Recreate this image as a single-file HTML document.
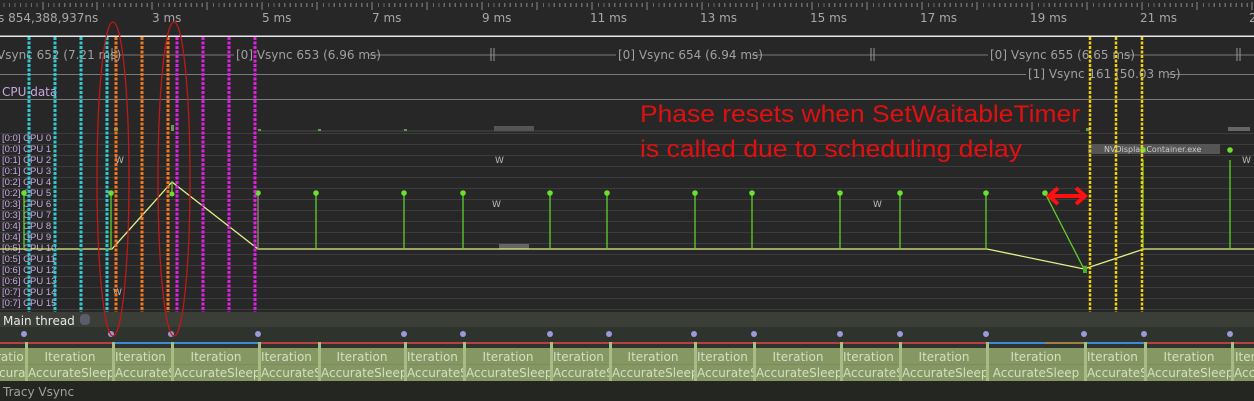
<!DOCTYPE html>
<html><head><meta charset="utf-8"><style>
html,body{margin:0;padding:0;background:#272727;width:1254px;height:401px;overflow:hidden}
svg{display:block;font-family:"DejaVu Sans","Liberation Sans",sans-serif}
</style></head><body>
<svg width="1254" height="401" viewBox="0 0 1254 401" xmlns="http://www.w3.org/2000/svg">
<rect width="1254" height="401" fill="#272727"/>
<g stroke="#8a8a8a" stroke-width="1">
<path d="M43 2V10M97 2V10M152 2V10M207 2V10M262 2V10M317 2V10M372 2V10M427 2V10M482 2V10M537 2V10M592 2V10M647 2V10M702 2V10M757 2V10M812 2V10M867 2V10M922 2V10M977 2V10M1032 2V10M1087 2V10M1142 2V10M1197 2V10M1252 2V10"/>
</g>
<g stroke="#6a6a6a" stroke-width="1" id="small">
<path d="M4 3V7M9.5 3V7M15 3V7M20.5 3V7M26 3V7M31.5 3V7M37 3V7M48.5 3V7M54 3V7M59.5 3V7M65 3V7M70.5 3V7M76 3V7M81.5 3V7M87 3V7M92.5 3V7"/>
</g>
<use href="#small" x="55"/><use href="#small" x="110"/><use href="#small" x="165"/><use href="#small" x="220"/><use href="#small" x="275"/><use href="#small" x="330"/><use href="#small" x="385"/><use href="#small" x="440"/><use href="#small" x="495"/><use href="#small" x="550"/><use href="#small" x="605"/><use href="#small" x="660"/><use href="#small" x="715"/><use href="#small" x="770"/><use href="#small" x="825"/><use href="#small" x="880"/><use href="#small" x="935"/><use href="#small" x="990"/><use href="#small" x="1045"/><use href="#small" x="1100"/><use href="#small" x="1155"/><use href="#small" x="1210"/>
<g fill="#a8a8a8" font-size="12">
<text x="-2" y="22">s 854,388,937ns</text>
<text x="152" y="22">3 ms</text><text x="262" y="22">5 ms</text><text x="372" y="22">7 ms</text>
<text x="482" y="22">9 ms</text><text x="590" y="22">11 ms</text><text x="700" y="22">13 ms</text>
<text x="810" y="22">15 ms</text><text x="920" y="22">17 ms</text><text x="1030" y="22">19 ms</text>
<text x="1140" y="22">21 ms</text><text x="1249" y="22">2</text>
</g>
<rect x="0" y="35.5" width="1254" height="1.5" fill="#e8e8e8"/>
<g stroke="#7a7a7a" stroke-width="1">
<line x1="0" y1="55" x2="1254" y2="55"/>
<line x1="0" y1="74.5" x2="1254" y2="74.5"/>
<line x1="0" y1="99.5" x2="1254" y2="99.5"/>
<path d="M112 48V61M115 48V61M491 48V61M494 48V61M871 48V61M874 48V61M1237 48V61M1240 48V61" stroke="#9a9a9a"/>
</g>
<g font-size="12" fill="#a0a0a0">
<rect x="0" y="46" width="110" height="16" fill="#272727"/>
<text x="-3" y="59">Vsync 652 (7.21 ms)</text>
<rect x="234" y="46" width="134" height="16" fill="#272727"/>
<text x="236" y="59">[0] Vsync 653 (6.96 ms)</text>
<rect x="616" y="46" width="136" height="16" fill="#272727"/>
<text x="618" y="59">[0] Vsync 654 (6.94 ms)</text>
<rect x="988" y="46" width="136" height="16" fill="#272727"/>
<text x="990" y="59">[0] Vsync 655 (6.65 ms)</text>
<rect x="1026" y="66" width="142" height="16" fill="#272727"/>
<text x="1028" y="78">[1] Vsync 161 (50.03 ms)</text>
</g>
<text x="2" y="96" font-size="12" fill="#c9a6e0">CPU data</text>
<g stroke="#3c3c3c" stroke-width="1">
<path d="M0 133.5H1254M0 144.5H1254M0 155.5H1254M0 166.5H1254M0 177.5H1254M0 188.5H1254M0 199.5H1254M0 210.5H1254M0 221.5H1254M0 232.5H1254M0 243.5H1254M0 254.5H1254M0 265.5H1254M0 276.5H1254M0 287.5H1254M0 298.5H1254M0 309.5H1254"/>
</g>
<path d="M258 131H1080" stroke="#4a4a4a"/>
<g font-size="9.5" fill="#c8a8e4" font-family="'Liberation Sans',sans-serif">
<text x="2" y="141">[0:0] CPU 0</text><text x="2" y="152">[0:0] CPU 1</text><text x="2" y="163">[0:1] CPU 2</text>
<text x="2" y="174">[0:1] CPU 3</text><text x="2" y="185">[0:2] CPU 4</text><text x="2" y="196">[0:2] CPU 5</text>
<text x="2" y="207">[0:3] CPU 6</text><text x="2" y="218">[0:3] CPU 7</text><text x="2" y="229">[0:4] CPU 8</text>
<text x="2" y="240">[0:4] CPU 9</text><text x="2" y="251">[0:5] CPU 10</text><text x="2" y="262">[0:5] CPU 11</text>
<text x="2" y="273">[0:6] CPU 12</text><text x="2" y="284">[0:6] CPU 13</text><text x="2" y="295">[0:7] CPU 14</text>
<text x="2" y="306">[0:7] CPU 15</text>
</g>
<g fill="#5fa050"><rect x="258" y="129" width="3" height="2"/><rect x="318" y="129" width="3" height="2"/><rect x="404" y="129" width="3" height="2"/><rect x="114" y="128" width="4" height="3"/><rect x="171" y="125" width="3" height="6"/><rect x="1086" y="128" width="4" height="3"/></g>
<rect x="494" y="126" width="40" height="5" fill="#555"/>
<rect x="1228" y="127" width="22" height="4" fill="#666"/>
<rect x="1088" y="144" width="132" height="10" fill="#555"/>
<text x="1104" y="152" font-size="8" fill="#ccc">NVDisplay.Container.exe</text>
<g font-size="9" fill="#bbb"><text x="115" y="163">W</text><text x="495" y="163">W</text><text x="492" y="207">W</text><text x="873" y="207">W</text><text x="1242" y="163">W</text><text x="113" y="295">W</text></g>
<rect x="499" y="244" width="30" height="5" fill="#666"/>
<path d="M0 249H112L172 182L258 249H987L1084 269L1144 249H1254" fill="none" stroke="#e6f08a" stroke-width="1.3"/>
<g stroke="#5fcf2a" stroke-width="1.3" fill="none">
<path d="M24 193V249M111 193V249M316 193V249M404 193V249M463 193V249M550 193V249M607 193V249M695 193V249M752 193V249M840 193V249M900 193V249M986 193V249M1045 193L1084 269M1230 160V249M1143 160V249M172 182V195"/>
</g>
<path d="M258 193V249" stroke="#8a8a70" stroke-width="1.3"/>
<g fill="#6ae030">
<circle cx="24" cy="193" r="2.8"/><circle cx="111" cy="193" r="2.8"/><circle cx="172" cy="194" r="2.5"/><circle cx="258" cy="193" r="2.8"/><circle cx="316" cy="193" r="2.8"/><circle cx="404" cy="193" r="2.8"/><circle cx="463" cy="193" r="2.8"/><circle cx="550" cy="193" r="2.8"/><circle cx="607" cy="193" r="2.8"/><circle cx="695" cy="193" r="2.8"/><circle cx="752" cy="193" r="2.8"/><circle cx="840" cy="193" r="2.8"/><circle cx="900" cy="193" r="2.8"/><circle cx="986" cy="193" r="2.8"/><circle cx="1045" cy="193" r="2.8"/><circle cx="1143" cy="150" r="2.8"/><circle cx="1230" cy="150" r="2.8"/>
</g>
<rect x="1083" y="266" width="4" height="7" fill="#4caf30"/>
<g stroke-width="3" stroke-dasharray="3 1.5" fill="none">
<path d="M29 37V312M55 37V312M81 37V312M107 37V312" stroke="#32c8d0"/>
<path d="M116 37V314M142 37V314M168 37V314" stroke="#f07820"/>
<path d="M177 37V312M203 37V312M229 37V312M255 37V314" stroke="#e020e0"/>
<path d="M1090 37V314M1116 37V314M1142 37V314" stroke="#f0d010" stroke-width="2.5"/>
</g>
<rect x="0" y="312" width="1254" height="15" fill="#3a3e37"/>
<text x="3" y="325" font-size="12" fill="#e8e8e8">Main thread</text>
<rect x="80" y="314" width="10" height="11" rx="4" fill="#5a5e6a"/>
<rect x="0" y="327" width="1254" height="21" fill="#2f332d"/>
<rect x="0" y="342" width="1254" height="2" fill="#b84040"/>
<rect x="113" y="342" width="146" height="2" fill="#3a8ad8"/>
<rect x="987" y="342" width="58" height="2" fill="#3a8ad8"/>
<rect x="1045" y="342" width="40" height="2" fill="#a08040"/>
<rect x="1085" y="342" width="60" height="2" fill="#3a8ad8"/>
<g fill="#9a9ad8">
<circle cx="24" cy="334" r="3"/><circle cx="111" cy="334" r="3"/><circle cx="171" cy="334" r="3"/><circle cx="258" cy="334" r="3"/><circle cx="404" cy="334" r="3"/><circle cx="463" cy="334" r="3"/><circle cx="550" cy="334" r="3"/><circle cx="609" cy="334" r="3"/><circle cx="694" cy="334" r="3"/><circle cx="754" cy="334" r="3"/><circle cx="840" cy="334" r="3"/><circle cx="900" cy="334" r="3"/><circle cx="986" cy="334" r="3"/><circle cx="1084" cy="334" r="3"/><circle cx="1144" cy="334" r="3"/><circle cx="1230" cy="334" r="3"/>
</g>
<rect x="0" y="348" width="1254" height="33" fill="#859864"/>
<path d="M0 364.5H1254" stroke="#7a8c5c"/>
<g fill="#a8bc86">
<rect x="25" y="342" width="3" height="39"/><rect x="112" y="342" width="3" height="39"/><rect x="171" y="342" width="3" height="39"/><rect x="258" y="342" width="3" height="39"/><rect x="318" y="342" width="3" height="39"/><rect x="404" y="342" width="3" height="39"/><rect x="463" y="342" width="3" height="39"/><rect x="550" y="342" width="3" height="39"/><rect x="609" y="342" width="3" height="39"/><rect x="694" y="342" width="3" height="39"/><rect x="753" y="342" width="3" height="39"/><rect x="840" y="342" width="3" height="39"/><rect x="899" y="342" width="3" height="39"/><rect x="986" y="342" width="3" height="39"/><rect x="1084" y="342" width="3" height="39"/><rect x="1144" y="342" width="3" height="39"/><rect x="1231" y="342" width="3" height="39"/>
</g>
<g font-size="12" fill="#d4dfc0">
<svg x="0" y="348" width="25" height="33"><text x="-4" y="13">ratio</text><text x="-1" y="29">cura</text></svg>
<svg x="28" y="348" width="84" height="33"><text x="42" y="13" text-anchor="middle">Iteration</text><text x="0" y="29">AccurateSleep</text></svg>
<svg x="115" y="348" width="56" height="33"><text x="0" y="13">Iteration</text><text x="0" y="29">AccurateSleep</text></svg>
<svg x="174" y="348" width="84" height="33"><text x="42" y="13" text-anchor="middle">Iteration</text><text x="0" y="29">AccurateSleep</text></svg>
<svg x="261" y="348" width="57" height="33"><text x="0" y="13">Iteration</text><text x="0" y="29">AccurateSleep</text></svg>
<svg x="321" y="348" width="83" height="33"><text x="41" y="13" text-anchor="middle">Iteration</text><text x="0" y="29">AccurateSleep</text></svg>
<svg x="407" y="348" width="56" height="33"><text x="0" y="13">Iteration</text><text x="0" y="29">AccurateSleep</text></svg>
<svg x="466" y="348" width="84" height="33"><text x="42" y="13" text-anchor="middle">Iteration</text><text x="0" y="29">AccurateSleep</text></svg>
<svg x="553" y="348" width="56" height="33"><text x="0" y="13">Iteration</text><text x="0" y="29">AccurateSleep</text></svg>
<svg x="612" y="348" width="82" height="33"><text x="41" y="13" text-anchor="middle">Iteration</text><text x="0" y="29">AccurateSleep</text></svg>
<svg x="697" y="348" width="56" height="33"><text x="0" y="13">Iteration</text><text x="0" y="29">AccurateSleep</text></svg>
<svg x="756" y="348" width="84" height="33"><text x="42" y="13" text-anchor="middle">Iteration</text><text x="0" y="29">AccurateSleep</text></svg>
<svg x="843" y="348" width="56" height="33"><text x="0" y="13">Iteration</text><text x="0" y="29">AccurateSleep</text></svg>
<svg x="902" y="348" width="84" height="33"><text x="42" y="13" text-anchor="middle">Iteration</text><text x="0" y="29">AccurateSleep</text></svg>
<svg x="989" y="348" width="95" height="33"><text x="47" y="13" text-anchor="middle">Iteration</text><text x="47" y="29" text-anchor="middle">AccurateSleep</text></svg>
<svg x="1087" y="348" width="57" height="33"><text x="0" y="13">Iteration</text><text x="0" y="29">AccurateSleep</text></svg>
<svg x="1147" y="348" width="84" height="33"><text x="42" y="13" text-anchor="middle">Iteration</text><text x="0" y="29">AccurateSleep</text></svg>
<svg x="1234" y="348" width="20" height="33"><text x="1" y="13">Iteration</text><text x="0" y="29">AccurateSleep</text></svg>
</g>
<rect x="0" y="381" width="1254" height="20" fill="#242622"/>
<text x="3" y="396" font-size="12" fill="#a0a0a0">Tracy Vsync</text>
<g fill="none" stroke="#c01818" stroke-width="1.3">
<ellipse cx="113" cy="179" rx="16" ry="157"/>
<ellipse cx="174" cy="179" rx="16" ry="157"/>
</g>
<g font-family="'Liberation Sans',sans-serif" font-size="24" fill="#e01010">
<text x="640" y="122" textLength="440" lengthAdjust="spacingAndGlyphs">Phase resets when SetWaitableTimer</text>
<text x="640" y="157" textLength="382" lengthAdjust="spacingAndGlyphs">is called due to scheduling delay</text>
</g>
<g stroke="#ff1010" stroke-width="4" fill="none">
<path d="M1052 196H1082M1058 188L1049 196L1058 204M1076 188L1085 196L1076 204"/>
</g>
</svg>
</body></html>
